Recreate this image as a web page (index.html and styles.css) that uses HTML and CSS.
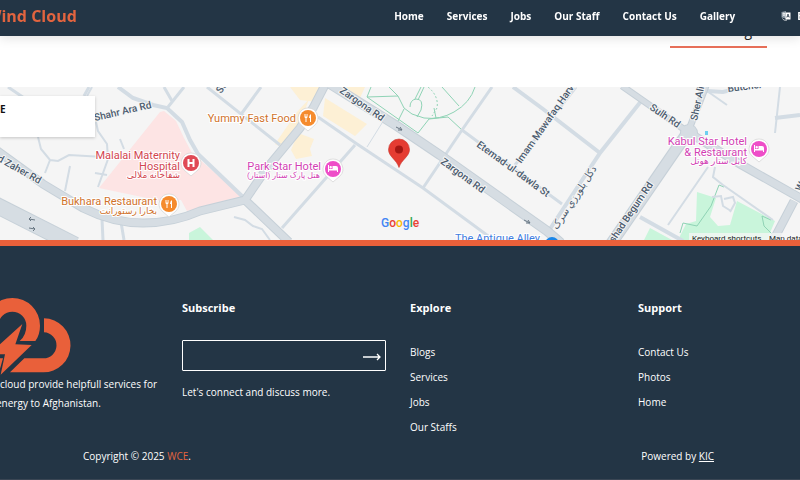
FILE: index.html
```
<!DOCTYPE html>
<html lang="en">
<head>
<meta charset="utf-8">
<meta name="viewport" content="width=device-width, initial-scale=1">
<title>Wind Cloud</title>
<link rel="stylesheet" href="styles.css">
</head>
<body>
<header class="topbar">
  <a class="brand" href="#">Wind Cloud</a>
  <nav class="nav">
    <a href="#">Home</a>
    <a href="#">Services</a>
    <a href="#">Jobs</a>
    <a href="#">Our Staff</a>
    <a href="#">Contact Us</a>
    <a href="#">Gallery</a>
  </nav>
  <button class="lang" type="button">
    <svg width="10" height="10" viewBox="0 0 20 20" aria-hidden="true">
      <path d="M1 2l9-2v15l-9-2z" fill="#8b98a3"/>
      <path d="M3 5h5M5.500 3v2M7.500 5c-.5 3-2 4-4.500 5M3.500 6c1 2 2.500 3 4.500 4" stroke="#fff" stroke-width="1.400" fill="none"/>
      <path d="M9 3h10v14H9z" fill="#fff"/>
      <path d="M11.500 13l2.500-7 2.500 7M12.500 11h3" stroke="#233446" stroke-width="1.500" fill="none"/>
      <path d="M3 15c2 4 6 4 9 3" stroke="#fff" stroke-width="1.500" fill="none"/>
    </svg>
    <span>EN</span>
  </button>
</header>

<main>
  <section class="tabs">
    <a class="tab" href="#">g</a>
  </section>

  <section class="map">
    <svg class="map-canvas" viewBox="0 87 800 153" preserveAspectRatio="xMidYMid slice" role="img" aria-label="Map">
      <rect x="0" y="87" width="800" height="153" fill="#f5f5f5"/>
      <path fill="#fde4e4" d="M160 112l4-1 12 10 8 17 8 15 50 43-23 6-19 6-13 3-6-11-20 1-62-13z"/>
      <g fill="#fdf0d5">
        <path d="M297 112l12-13-14 38-8 13-12-6z"/>
        <path d="M290 87h34l-8 15-16-2zM331 87h34l-5 11-13-4z"/>
        <path d="M325 98l42 26-12 12-32-20zM298 133l16 6-4 10 2 7-16 3-5-9z"/>
      </g>
      <g fill="#c9f5db">
        <path d="M697 192l19 6-6 19 8 9 12-1 7-24 38 20-8 19h-89l8-16 10-3z"/>
        <path d="M650 228l22 12h-28zM189 233l11-6 13 13h-24z"/>
      </g>
      <g fill="none" stroke="#8fd3b5">
        <path d="M371 87l-4 10 31-1M398 96l-9-9M367 97l51 36 11-14 19-2 14 13M398 96l6 12 8 6 12 4q16 2 30-6 16-9 21-25M404 109l-6 12"/>
        <path d="M442 87l17 19M410 107q0-7 6-8 8 0 5 11l-4 7M415 99l6-12M418 100l6-13M436 118l-2-10"/>
        <path d="M428 87q11 9 9 21l-5 8" stroke-dasharray="2 2"/>
        <path d="M680 233l3-10 14 3 14-20 8-21 5 2M771 220l-9-4 2 10 8 8"/>
      </g>
      <g class="road">
        <path stroke-width="2" d="M92 87l-5 9M38 137l3 12 9 11 8 1 11-6 35 2M50 160l-5 13M96 122l2 9 9 13 1 15-10 28M120 139l4 10M70 166l-5 25M95 173l12 2"/>
        <path stroke-width="3" d="M8 87l25 17M89 87l-5 9M102 219l1 21M121 222l3 18M164 87l8 14M184 87l-16 20"/>
        <path stroke-width="3" d="M207 87l73 58M261 87l-19 26M318 117l39 27 66 44 72 53M355 145l-73 83M492 87l-30 43-39 58M462 130l100 74M576 87l-61 78"/>
        <path stroke-width="1" d="M382 123l-15 24"/>
        <path stroke-width="2" d="M234 217l11 3 8 6 9 3 8 11M708 167l-40 58M715 167l-2 10 10 8M723 185l50 35M712 197l9-1 2 10 8 5M724 199l9-2 2 6-5 9M707 91l20 14M775 133l5-46"/>
        <path stroke-width="4" d="M118 87l15 11 20 7 14 3 15 14 8 18 8 14 45 43M513 87l30 22 57 44M548 232l52-79 42-53M707 91l16 1 24-6M775 118l25-3M640 217l43 24"/>
      </g>
      <g class="road-edge">
        <path stroke-width="17" d="M-8 203l83 42"/>
        <path stroke-width="9" d="M-4 150l47 34 40 24q30 15 60 15t57-12l45-11 44 42M245 200l22-32 33-40 13-20 13-25"/>
        <path stroke-width="10" d="M330 84l67 42 43 29 107 76 14 12"/>
        <path stroke-width="7" d="M622 86l66 46 18-46"/>
        <path stroke-width="12" d="M688 132l-55 80-22 32"/>
        <path stroke-width="9" d="M688 132l52 32 62 35M794 201l-22 42"/>
        <circle cx="689" cy="133" r="9"/>
      </g>
      <g class="road-main">
        <path stroke-width="15" d="M-8 203l83 42"/>
        <path stroke-width="7" d="M-4 150l47 34 40 24q30 15 60 15t57-12l45-11 44 42M245 200l22-32 33-40 13-20 13-25"/>
        <path stroke-width="8" d="M330 84l67 42 43 29 107 76 14 12"/>
        <path stroke-width="5" d="M622 86l66 46 18-46"/>
        <path stroke-width="10" d="M688 132l-55 80-22 32"/>
        <path stroke-width="7" d="M688 132l52 32 62 35M794 201l-22 42"/>
        <circle cx="689" cy="133" r="8"/>
      </g>
      <g fill="none" stroke="#697783">
        <path d="M35 220l-6-1m2-2l-2 2 2 2M29 228l6 1m-2-2l2 2-2 2M396 127l6 3m-2-3l2 3-4 0M524 220l6 3m-2-3l2 3-4 0"/>
      </g>
      <path fill="#6dcff0" d="M705 131h3v4h-3z"/>
      <g class="street">
        <text transform="translate(95 121) rotate(-13)">Shahr Ara Rd</text>
        <text transform="translate(-8 158) rotate(29)">ad Zaher Rd</text>
        <text transform="translate(339 92) rotate(35)">Zargona Rd</text>
        <text transform="translate(440 163) rotate(36)">Zargona Rd</text>
        <text transform="translate(476 146) rotate(36)">Etemad-ul-dawla St</text>
        <text transform="translate(521 164) rotate(-55)">Imam Mawafaq Harvi</text>
        <text transform="translate(649 109) rotate(34)">Sulh Rd</text>
        <text transform="translate(697 121) rotate(-78)">Sher Ali</text>
        <text transform="translate(614 243) rotate(-56)">shad Begum Rd</text>
        <text transform="translate(728 92) rotate(-7)">Butcher</text>
        <text transform="translate(221 94) rotate(-55)">St</text>
        <text transform="translate(801 192) rotate(-62)">W</text>
        <text class="fa" transform="translate(557 230) rotate(-57)">دکل بلورزي سرک</text>
      </g>
      <defs>
        <path id="pin" d="M0-10a10 10 0 0 1 7 17L0 13-7 7A10 10 0 0 1 0-10z"/>
        <path id="fork" d="M-3.500-4v3q0 1 1 1v4h1v-4q1 0 1-1v-3h-.7v2.500h-.6V-4h-.7v2.500h-.5V-4zM3-4q-2 1-2 4h1v4h1z"/>
        <path id="bed" d="M-5-4h1v4h3.500v-3H3q2 0 2 2v4H4V1.500h-8V3h-1zM-2.300-3a1.200 1.200 0 1 1 0 2.400 1.200 1.200 0 0 1 0-2.400z"/>
      </defs>
      <g fill="#fff" stroke="#d2d2d2" stroke-width=".7">
        <use href="#pin" x="308" y="118"/><use href="#pin" x="169" y="204"/><use href="#pin" x="191" y="163"/>
        <use href="#pin" x="333" y="169"/><use href="#pin" x="759" y="149"/>
      </g>
      <g fill="#f58b2d"><circle cx="308" cy="118" r="8"/><circle cx="169" cy="204" r="8"/></g>
      <circle cx="191" cy="163" r="8" fill="#e04a55"/>
      <g fill="#ee4ec8"><circle cx="333" cy="169" r="8"/><circle cx="759" cy="149" r="8"/></g>
      <circle cx="552" cy="244" r="7" fill="#1a86e8"/>
      <g fill="#fff">
        <use href="#fork" x="308" y="118"/><use href="#fork" x="169" y="204"/>
        <use href="#bed" x="333" y="169"/><use href="#bed" x="759" y="149"/>
        <path d="M187.500 159h2v3h3v-3h2v8h-2v-3h-3v3h-2z"/>
      </g>
      <g class="place">
        <text class="food" x="296" y="122">Yummy Fast Food</text>
        <text class="food" x="157" y="205">Bukhara Restaurant</text>
        <text class="food fa" x="157" y="214">بخارا رستورانت</text>
        <text class="med" x="180" y="159">Malalai Maternity</text>
        <text class="med" x="180" y="170">Hospital</text>
        <text class="med fa" x="180" y="178">شفاخانه ملالی</text>
        <text class="hotel" x="321" y="170">Park Star Hotel</text>
        <text class="hotel fa-small" x="320" y="178">هتل پارک ستار (استار)</text>
        <text class="hotel" x="747" y="145">Kabul Star Hotel</text>
        <text class="hotel" x="747" y="156">&amp; Restaurant</text>
        <text class="hotel fa" x="747" y="164">کابل ستار هوتل</text>
        <text class="shop" x="540" y="242">The Antique Alley</text>
      </g>
      <path fill="#e53c32" stroke="#c8352d" stroke-width=".6" d="M399 139a10.500 10.500 0 0 1 10.500 10.500c0 7-8 10-10.500 18-2.500-8-10.500-11-10.500-18A10.500 10.500 0 0 1 399 139z"/>
      <circle cx="399" cy="149.500" r="4" fill="#a51713"/>
      <text class="google" x="381" y="227"><tspan fill="#4285f4">G</tspan><tspan fill="#ea4335">o</tspan><tspan fill="#fbbc05">o</tspan><tspan fill="#4285f4">g</tspan><tspan fill="#34a853">l</tspan><tspan fill="#ea4335">e</tspan></text>
      <path fill="#f5f5f5" fill-opacity=".75" d="M689 233h111v7H689z"/>
      <text class="credit" x="692" y="241">Keyboard shortcuts</text>
      <text class="credit" x="769" y="241">Map data</text>
    </svg>
    <div class="map-card">E</div>
  </section>
</main>

<footer class="footer">
  <div class="columns">
    <section class="about">
      <svg class="logo" width="96" height="79" viewBox="-72 33 288 237" role="img" aria-label="Wind Cloud logo">
        <g fill="#e9603a">
          <path d="M-43 122A83 83 0 0 1 123 122Q123 149 109 168H62Q82 151 82 122A42 42 0 0 0-2 122L2 138-15 148H-40z"/>
          <path d="M135 100A81 81 0 0 1 132 262H33L76 220H132A39 39 0 0 0 135 142z"/>
          <path d="M70 117L49 178 98 180 5 269 18 208H-30z"/>
          <path d="M-40 220H12L0 262H-40z"/>
        </g>
      </svg>
      <p>cloud provide helpfull services for<br>energy to Afghanistan.</p>
    </section>
    <section>
      <h2>Subscribe</h2>
      <form class="subscribe">
        <input type="email" aria-label="Email">
        <button type="submit" aria-label="Subscribe">
          <svg width="18" height="8" viewBox="0 0 18 8" aria-hidden="true"><path d="M0 4h17M14 1l3 3-3 3" fill="none" stroke="#fff" stroke-width="1.300"/></svg>
        </button>
      </form>
      <p>Let's connect and discuss more.</p>
    </section>
    <section>
      <h2>Explore</h2>
      <ul>
        <li><a href="#">Blogs</a></li>
        <li><a href="#">Services</a></li>
        <li><a href="#">Jobs</a></li>
        <li><a href="#">Our Staffs</a></li>
      </ul>
    </section>
    <section>
      <h2>Support</h2>
      <ul>
        <li><a href="#">Contact Us</a></li>
        <li><a href="#">Photos</a></li>
        <li><a href="#">Home</a></li>
      </ul>
    </section>
  </div>
  <div class="legal">
    <span>Copyright © 2025 <a class="accent" href="#">WCE</a>.</span>
    <span>Powered by <a class="underlined" href="#">KIC</a></span>
  </div>
</footer>
</body>
</html>
```
FILE: styles.css
```
* { box-sizing: border-box; }

body {
  margin: 0;
  overflow-x: hidden;
  background: #fff;
  color: #fff;
  font: 10px/19px "Open Sans", "Noto Sans", sans-serif;
}

a { color: inherit; text-decoration: none; }
h2, p, ul { margin: 0; padding: 0; }
ul { list-style: none; }

.topbar {
  position: fixed;
  z-index: 5;
  top: 0;
  left: 0;
  right: 0;
  display: flex;
  align-items: center;
  height: 36px;
  padding-bottom: 4px;
  overflow: hidden;
  background: #233545;
  box-shadow: 0 2px 12px rgba(0, 0, 0, 0.12);
}

.brand {
  margin-left: -14px;
  color: #e2643f;
  font-size: 16px;
  font-weight: 700;
  white-space: nowrap;
}

.nav {
  display: flex;
  gap: 23px;
  margin-left: auto;
  font-weight: 700;
  white-space: nowrap;
}

.lang {
  display: flex;
  align-items: center;
  gap: 6px;
  margin: 0 -11px 0 46px;
  padding: 0;
  border: 0;
  background: none;
  color: inherit;
  font: inherit;
  font-weight: 700;
}

.tabs {
  display: flex;
  justify-content: flex-end;
  height: 87px;
  padding: 19px 33px 39px 0;
}

.tab {
  width: 97px;
  padding-right: 15px;
  border-bottom: 2px solid #e8705a;
  color: #222;
  font-size: 14px;
  line-height: 24px;
  text-align: right;
}

.map { position: relative; }

.map-canvas {
  display: block;
  width: 100%;
  height: 153px;
  font-family: Roboto, "DejaVu Sans", sans-serif;
}

.map-card {
  position: absolute;
  top: 9px;
  left: 0;
  width: 95px;
  height: 41px;
  padding-top: 4px;
  background: #fff;
  box-shadow: 0 1px 3px rgba(0, 0, 0, 0.2);
  color: #111;
  font-weight: 700;
}

.road { fill: none; stroke: #d3dce4; }
.road-edge { fill: none; stroke: #c6d0d8; }
.road-edge circle { fill: #c6d0d8; stroke: none; }
.road-main { fill: none; stroke: #d6dde3; }
.road-main circle { fill: #d6dde3; stroke: none; }

.street text {
  fill: #4b5b6e;
  stroke: #f5f5f5;
  stroke-width: 2px;
  paint-order: stroke;
  font-size: 10px;
  font-weight: 500;
}

.place text {
  stroke: #fff;
  stroke-width: 2px;
  paint-order: stroke;
  font-size: 11px;
  text-anchor: end;
}

.place .food { fill: #d0722b; }
.place .med { fill: #d2454f; }
.place .hotel { fill: #d23fb4; }
.place .shop { fill: #3f7de0; }
.place .fa { font-size: 9px; }
.place .fa-small { font-size: 8px; }
.google { font-size: 12px; font-weight: 500; }
.credit { fill: #222; font-size: 8px; }

.footer {
  overflow: hidden;
  min-height: 240px;
  padding: 50px 0 13px;
  border-top: 6px solid #e9603a;
  border-bottom: 1px solid #3a4654;
  background: #233545;
}

.columns {
  display: grid;
  grid-template-columns: repeat(4, 1fr);
  gap: 24px;
  margin: 0 -42px 0 -46px;
}

.columns h2 {
  margin-bottom: 20px;
  font-size: 11px;
  line-height: 24px;
  font-weight: 700;
}

.columns li { line-height: 25px; }

.about { white-space: nowrap; }
.about p { padding-left: 42px; text-indent: 4px; }
.logo { display: block; margin-left: 21px; }

.subscribe {
  display: flex;
  height: 31px;
  margin-bottom: 12px;
  border: 1px solid #fff;
  border-radius: 1px;
}

.subscribe input {
  flex: 1;
  min-width: 0;
  border: 0;
  outline: 0;
  background: transparent;
  color: #fff;
  font: inherit;
}

.subscribe button {
  display: flex;
  align-items: center;
  padding: 3px 4px 0;
  border: 0;
  background: none;
}

.legal {
  display: flex;
  justify-content: space-between;
  padding: 7px 86px 0 83px;
}

.accent { color: #e2643f; }
.underlined { text-decoration: underline; }
```
